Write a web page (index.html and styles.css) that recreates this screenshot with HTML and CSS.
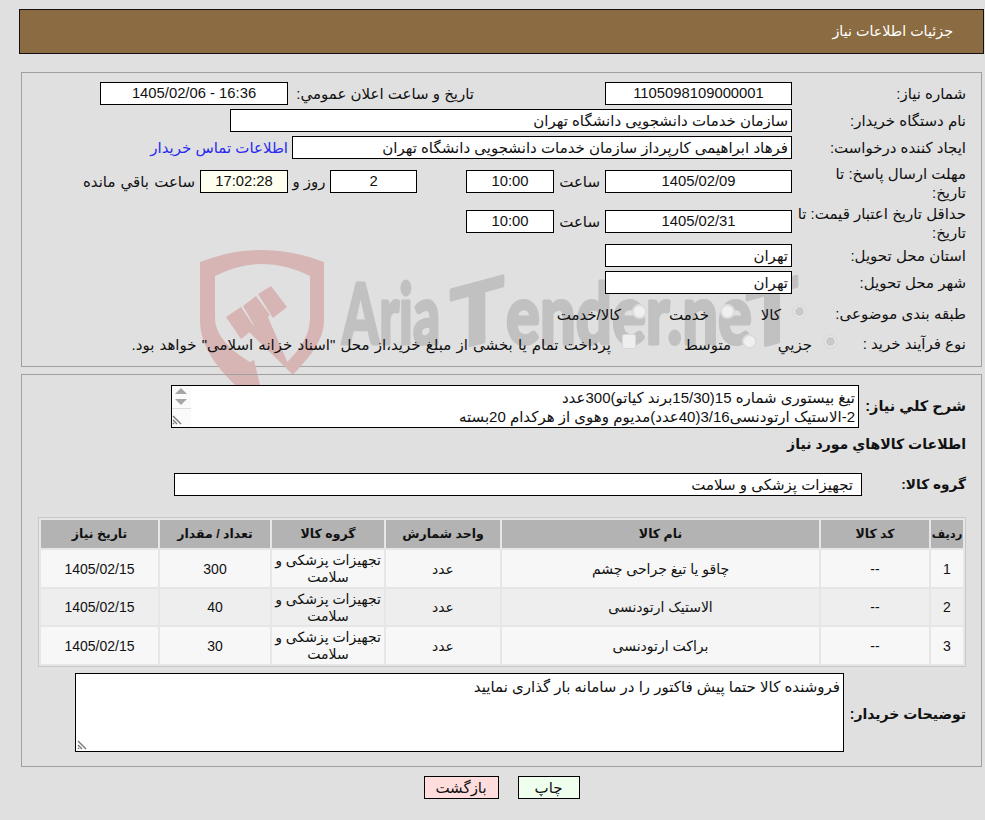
FILE: index.html
```html
<!DOCTYPE html>
<html lang="fa" dir="rtl">
<head>
<meta charset="utf-8">
<title>جزئیات اطلاعات نیاز</title>
<link rel="stylesheet" href="styles.css">
</head>
<body>
<header class="title-bar">جزئیات اطلاعات نیاز</header>

<section class="panel panel-main">
  <svg class="watermark" viewBox="0 0 600 140" aria-hidden="true">
    <g fill="#d7b5b5">
      <path d="M0 12 Q62 -12 124 12 V70 C124 92 108 108 93 125 L85 114 C100 100 110 85 110 68 V26 Q62 2 15 26 V68 C15 85 30 100 50 112 L54 110 L60 135 L35 135 C15 115 0 95 0 70 Z"/>
      <path d="M47 80 L67 65 L93 125 L80 112 Z"/>
      <path d="M26 67 L41 57 L55 78 L41 89 Z"/>
      <path d="M43 56 L56 46 L70 65 L55 77 Z"/>
      <path d="M58 44 L71 36 L87 57 L73 68 Z"/>
    </g>
    <g class="wm-text">
      <text x="142" y="94" textLength="98" lengthAdjust="spacingAndGlyphs">Aria</text>
      <text x="250" y="168" textLength="54" lengthAdjust="spacingAndGlyphs" transform="skewY(-15)">T</text>
      <text x="306" y="94" textLength="246" lengthAdjust="spacingAndGlyphs">ender.ne</text>
      <text x="546" y="247" textLength="52" lengthAdjust="spacingAndGlyphs" transform="skewY(-15)">T</text>
    </g>
  </svg>

  <div class="row">
    <div class="label">شماره نیاز:</div>
    <div class="box w-lg num">1105098109000001</div>
    <div class="public-label">تاریخ و ساعت اعلان عمومي:</div>
    <div class="box w-public num">1405/02/06 - 16:36</div>
  </div>
  <div class="row">
    <div class="label">نام دستگاه خریدار:</div>
    <div class="box w-buyer">سازمان خدمات دانشجویی دانشگاه تهران</div>
  </div>
  <div class="row">
    <div class="label">ایجاد کننده درخواست:</div>
    <div class="box w-creator">فرهاد ابراهیمی کارپرداز سازمان خدمات دانشجویی دانشگاه تهران</div>
    <a class="contact" href="#">اطلاعات تماس خریدار</a>
  </div>
  <div class="row row-tall row-deadline">
    <div class="label">مهلت ارسال پاسخ: تا<br>تاریخ:</div>
    <div class="box w-lg num">1405/02/09</div>
    <div class="time-label">ساعت</div>
    <div class="box w-time num">10:00</div>
    <div class="box w-days num">2</div>
    <div class="days-label">روز و</div>
    <div class="box w-clock num">17:02:28</div>
    <div class="remain-label">ساعت باقي مانده</div>
  </div>
  <div class="row row-tall row-validity">
    <div class="label">حداقل تاریخ اعتبار قیمت: تا<br>تاریخ:</div>
    <div class="box w-lg num">1405/02/31</div>
    <div class="time-label">ساعت</div>
    <div class="box w-time num">10:00</div>
  </div>
  <div class="row">
    <div class="label">استان محل تحویل:</div>
    <div class="box w-lg box-start">تهران</div>
  </div>
  <div class="row row-city">
    <div class="label">شهر محل تحویل:</div>
    <div class="box w-lg box-start">تهران</div>
  </div>
  <div class="row row-radio">
    <div class="label">طبقه بندی موضوعی:</div>
    <div class="radios radios-subject">
      <span class="radio-item item-kala"><span class="radio checked"></span><span>کالا</span></span>
      <span class="radio-item item-service"><span class="radio"></span><span>خدمت</span></span>
      <span class="radio-item"><span class="radio"></span><span>کالا/خدمت</span></span>
    </div>
  </div>
  <div class="row row-radio">
    <div class="label">نوع فرآیند خرید :</div>
    <div class="radios radios-process">
      <span class="radio-item item-minor"><span class="radio checked"></span><span>جزيي</span></span>
      <span class="radio-item item-medium"><span class="radio"></span><span>متوسط</span></span>
      <span class="check"></span>
      <span class="pay-note">پرداخت تمام یا بخشی از مبلغ خرید،از محل "اسناد خزانه اسلامی" خواهد بود.</span>
    </div>
  </div>
</section>

<section class="panel panel-detail">
  <div class="row-desc">
    <div class="strong-label">شرح کلي نیاز:</div>
    <div class="textbox desc-box">
      <div class="desc-text">تیغ بیستوری شماره 15(15/30برند کیاتو)300عدد<br>2-الاستیک ارتودنسی3/16(40عدد)مدیوم وهوی از هرکدام 20بسته</div>
      <div class="scrollbar">
        <span class="arrow-up"></span>
        <span class="arrow-down"></span>
        <svg class="grip grip-scroll" viewBox="0 0 10 10"><path d="M1 1 L9 9 M1 5 L5 9 M1 8 L2 9" stroke="#777" stroke-width="1.4" fill="none"/></svg>
      </div>
    </div>
  </div>
  <h2 class="section-title">اطلاعات کالاهاي مورد نیاز</h2>
  <div class="row-group">
    <div class="strong-label">گروه کالا:</div>
    <div class="box group-box">تجهیزات پزشکی و سلامت</div>
  </div>

  <table class="items">
    <thead>
      <tr>
        <th class="c-idx">ردیف</th><th class="c-code">کد کالا</th><th class="c-name">نام کالا</th><th class="c-unit">واحد شمارش</th><th class="c-group">گروه کالا</th><th class="c-qty">تعداد / مقدار</th><th class="c-date">تاریخ نیاز</th>
      </tr>
    </thead>
    <tbody>
      <tr class="odd"><td>1</td><td>--</td><td>چاقو یا تیغ جراحی چشم</td><td>عدد</td><td>تجهیزات پزشکی و سلامت</td><td>300</td><td>1405/02/15</td></tr>
      <tr class="even"><td>2</td><td>--</td><td>الاستیک ارتودنسی</td><td>عدد</td><td>تجهیزات پزشکی و سلامت</td><td>40</td><td>1405/02/15</td></tr>
      <tr class="odd"><td>3</td><td>--</td><td>براکت ارتودنسی</td><td>عدد</td><td>تجهیزات پزشکی و سلامت</td><td>30</td><td>1405/02/15</td></tr>
    </tbody>
  </table>

  <div class="row-notes">
    <div class="strong-label">توضیحات خریدار:</div>
    <div class="textbox notes-box">فروشنده کالا حتما پیش فاکتور را در سامانه بار گذاری نمایید
      <svg class="grip grip-notes" viewBox="0 0 10 10"><path d="M1 1 L9 9 M1 5 L5 9 M1 8 L2 9" stroke="#777" stroke-width="1.4" fill="none"/></svg>
    </div>
  </div>
</section>

<footer class="actions">
  <button class="btn btn-print" type="button">چاپ</button>
  <button class="btn btn-back" type="button">بازگشت</button>
</footer>
</body>
</html>
```
FILE: styles.css
```css
* { box-sizing: border-box; }
html, body { margin: 0; padding: 0; }
body {
  width: 985px;
  height: 820px;
  overflow: hidden;
  background: #e0e0e0;
  color: #111;
  font-family: "Liberation Sans", "DejaVu Sans", sans-serif;
  font-size: 15px;
  line-height: 19px;
  padding: 9px 1px 0 1px;
}
.title-bar {
  height: 45px;
  background: #8b6b41;
  border: 1px solid #111;
  color: #fff;
  padding: 12px 30px 0 0;
  margin-left: 18px;
  font-size: 14.3px;
}
.panel {
  position: relative;
  border: 1px solid #a0a0a0;
  margin-left: 20px;
  margin-right: 2px;
}
.panel-main {
  margin-top: 18px;
  height: 295px;
  padding-top: 9px;
}
.panel-detail {
  margin-top: 7px;
  height: 393px;
  padding-top: 10px;
  z-index: 1;
}
.watermark {
  position: absolute;
  left: 178px;
  top: 177px;
  width: 600px;
  height: 140px;
  direction: ltr;
  overflow: visible;
  pointer-events: none;
}
.wm-text text {
  direction: ltr;
  font-family: "Lato", "Roboto", sans-serif;
  font-weight: 900;
  font-size: 84px;
  fill: #c1c1c1;
  stroke: #c1c1c1;
  stroke-width: 3px;
  stroke-linejoin: round;
}
.panel-main .row { position: relative; }
.row {
  display: flex;
  align-items: center;
  min-height: 23px;
  margin-bottom: 4px;
}
.label {
  width: 189px;
  flex: none;
  padding-right: 15px;
}
.box {
  background: #fff;
  border: 1px solid #000;
  height: 23px;
  line-height: 21px;
  padding: 0 3px;
  flex: none;
  text-align: center;
  white-space: nowrap;
  overflow: hidden;
}
.num { direction: ltr; font-size: 14.8px; }
.box-start { text-align: right; }
.w-lg { width: 187px; }
.w-public { width: 188px; }
.w-buyer { width: 562px; text-align: right; }
.w-creator { width: 500px; text-align: right; }
.w-time { width: 88px; }
.w-days { width: 87px; margin-right: 49px; }
.w-clock { width: 88px; background: #fffff0; }
.public-label { width: 186px; margin-right: 131px; flex: none; white-space: nowrap; }
.contact { color: #2a2aee; text-decoration: none; margin-right: 4px; white-space: nowrap; }
.row-tall { align-items: flex-start; margin-bottom: 0; }
.row-tall .label { margin-top: -6px; }
.row-deadline { height: 40px; margin-top: 11px; }
.row-validity { height: 34px; }
.row-city { margin-bottom: 8px; }
.row-radio { margin-bottom: 7px; }
.time-label { width: 51px; padding-right: 5px; line-height: 23px; flex: none; }
.days-label { width: 42px; text-align: center; line-height: 23px; flex: none; white-space: nowrap; }
.remain-label { padding-right: 5px; line-height: 23px; white-space: nowrap; flex: none; word-spacing: 1px; }
.radios { display: flex; align-items: center; white-space: nowrap; padding-top: 2px; }
.radios-subject { margin-right: -15px; }
.radios-process { margin-right: -46px; }
.radio-item { display: inline-flex; align-items: center; gap: 11px; flex: none; }
.radio {
  display: inline-block;
  width: 15px;
  height: 15px;
  border-radius: 50%;
  background: #f0f0f0;
  border: 2px solid #dcdcdc;
  margin-bottom: 6px;
}
.radio.checked { background: #c9c9c9; box-shadow: inset 0 0 0 1px #f2f2f2; }
.item-kala { width: 72px; }
.item-service { width: 88px; }
.item-minor { width: 81px; }
.item-medium { width: 121px; }
.check {
  flex: none;
  width: 14px;
  height: 15px;
  background: #eee;
  border: 1px solid #d8d8d8;
  border-radius: 2px;
  margin-left: 11px;
  margin-bottom: 6px;
}
.pay-note { word-spacing: 1px; }

.row-desc, .row-group, .row-notes { display: flex; align-items: center; }
.strong-label {
  flex: none;
  padding-right: 15px;
  font-weight: bold;
  font-size: 13.7px;
  white-space: nowrap;
}
.row-desc .strong-label { width: 122px; font-size: 14.5px; }
.row-group .strong-label { width: 119px; }
.row-notes .strong-label { width: 137px; font-size: 14px; padding-top: 3px; }
.textbox {
  background: #fff;
  border: 1px solid #000;
  position: relative;
  flex: none;
}
.desc-box {
  width: 688px;
  height: 43px;
  display: flex;
  overflow: hidden;
}
.desc-text {
  flex: 1;
  padding: 2px 3px 0 0;
  white-space: nowrap;
  overflow: hidden;
}
.scrollbar {
  width: 19px;
  flex: none;
  background: #fafafa;
  position: relative;
}
.scrollbar::after {
  content: "";
  position: absolute;
  left: 0;
  right: 0;
  top: 22px;
  border-top: 1px solid #dcdcdc;
}
.arrow-up, .arrow-down {
  position: absolute;
  left: 3px;
  width: 0;
  height: 0;
  border-left: 6px solid transparent;
  border-right: 6px solid transparent;
}
.arrow-up { top: 2px; border-bottom: 6px solid #a5a5a5; }
.arrow-down { top: 13px; border-top: 6px solid #a5a5a5; }
.grip { position: absolute; width: 10px; height: 10px; }
.grip-scroll { left: 0; bottom: 2px; }
.grip-notes { left: 1px; bottom: 1px; }
.section-title { margin: 6px 0 0; padding-right: 15px; font-size: 14.1px; font-weight: bold; line-height: 20px; }
.row-group { margin-top: 19px; }
.group-box { width: 688px; text-align: right; padding-right: 8px; }
.items {
  margin: 21px 15px 0 0;
  width: 928px;
  border-collapse: separate;
  border-spacing: 2px;
  border: 1px solid #c8c8c8;
  background: #e6e6e6;
  table-layout: fixed;
  font-size: 14px;
  line-height: 17px;
}
.items th {
  background: #b3b3b3;
  height: 28px;
  font-size: 12.5px;
  font-weight: bold;
  padding: 0;
}
.items th.c-idx { font-size: 11.5px; }
.items td {
  padding: 1px 2px 0;
  text-align: center;
}
.items tr.odd td { background: #f7f7f7; height: 37px; }
.items tr.even td { background: #eeeeee; height: 36px; }
.c-idx { width: 32px; }
.c-code { width: 108px; }
.c-name { width: 317px; }
.c-unit { width: 114px; }
.c-group { width: 112px; }
.c-qty { width: 110px; }
.c-date { width: 117px; }
.row-notes { margin-top: 6px; }
.notes-box {
  width: 769px;
  height: 79px;
  padding: 3px 3px 0 0;
}
.actions {
  display: flex;
  justify-content: center;
  gap: 19px;
  margin-top: 9px;
  margin-left: 18px;
}
.btn {
  height: 23px;
  border: 1px solid #000;
  font: inherit;
  color: #111;
  padding: 0;
}
.btn-print { width: 62px; background: #eeffee; }
.btn-back { width: 75px; background: #ffdddd; }
```
